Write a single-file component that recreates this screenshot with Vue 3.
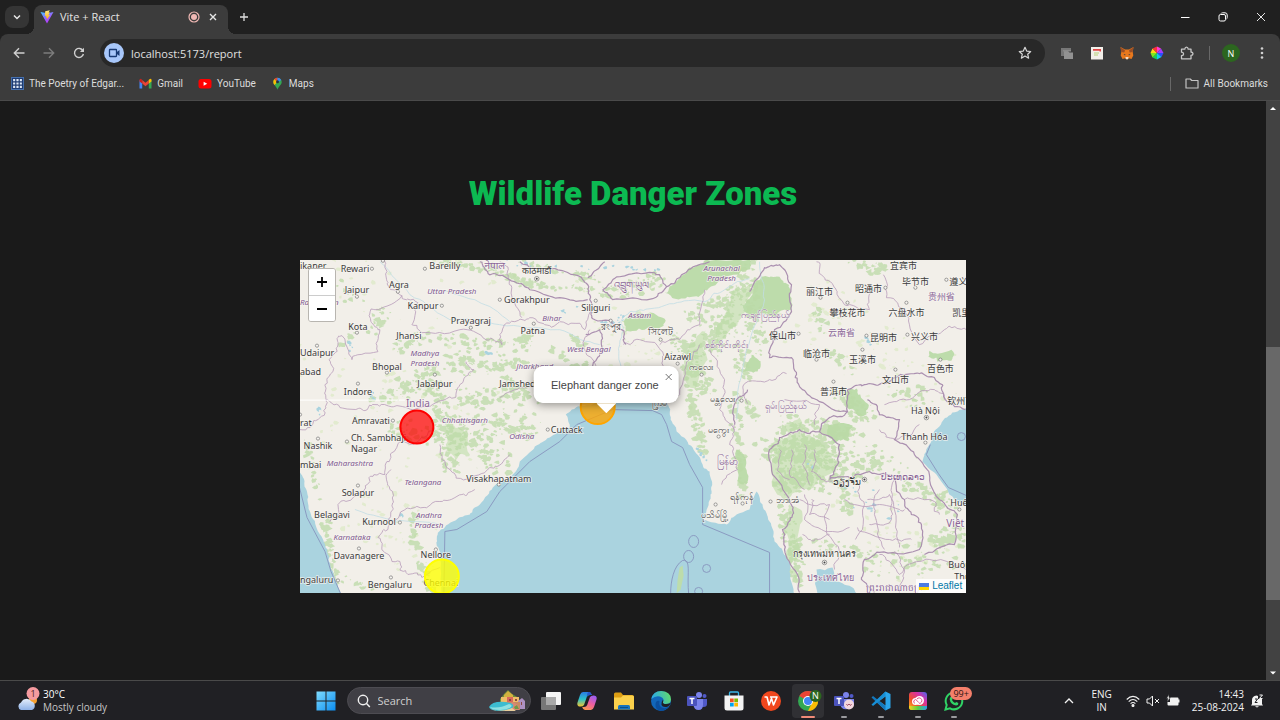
<script setup>
function makeRandom(seed) {
  let s = seed
  return () => {
    s = (s * 16807) % 2147483647
    return s / 2147483647
  }
}

// Roughens a coarse line so that it reads like a surveyed border or coast.
function rough(points, amp, seed, close) {
  const rnd = makeRandom(seed * 7919 + 13)
  let pts = points
  for (let pass = 0; pass < 3; pass++) {
    const next = []
    const a = amp / (pass + 1)
    for (let i = 0; i < pts.length - 1; i++) {
      const [x1, y1] = pts[i]
      const [x2, y2] = pts[i + 1]
      const len = Math.hypot(x2 - x1, y2 - y1)
      next.push(pts[i])
      if (len > 3) {
        const k = Math.min(a, len / 3)
        next.push([(x1 + x2) / 2 + (rnd() - 0.5) * 2 * k, (y1 + y2) / 2 + (rnd() - 0.5) * 2 * k])
      }
    }
    next.push(pts[pts.length - 1])
    pts = next
  }
  return 'M' + pts.map(p => p[0].toFixed(1) + ' ' + p[1].toFixed(1)).join('L') + (close ? 'Z' : '')
}

// [x1, y1, x2, y2, width, count]: forest patches scattered along a band
const bands = [
  [372, 330, 385, 310, 10, 26], [395, 350, 425, 335, 10, 26], [430, 335, 475, 345, 8, 26],
  [400, 385, 470, 355, 10, 50], [372, 400, 440, 385, 10, 50], [455, 365, 520, 365, 14, 60],
  [470, 345, 520, 345, 10, 24], [440, 405, 455, 470, 14, 110], [455, 400, 520, 395, 12, 60],
  [458, 430, 500, 460, 20, 110], [490, 420, 530, 430, 18, 80], [505, 380, 530, 400, 12, 34],
  [520, 335, 530, 345, 8, 18], [325, 520, 335, 590, 6, 60], [305, 440, 318, 500, 5, 24],
  [412, 515, 418, 550, 6, 30], [420, 560, 432, 590, 8, 30], [345, 580, 375, 592, 6, 16],
  [395, 430, 440, 440, 14, 40], [340, 345, 352, 336, 4, 12], [490, 268, 530, 285, 5, 50],
  [440, 262, 492, 270, 4, 24], [530, 285, 600, 290, 5, 30], [520, 262, 600, 280, 6, 34],
  [606, 292, 660, 282, 10, 60], [570, 335, 585, 345, 5, 16], [545, 345, 590, 372, 7, 16],
  [680, 340, 705, 395, 14, 110], [690, 318, 745, 292, 12, 80], [700, 350, 735, 315, 18, 100],
  [690, 400, 705, 450, 8, 60], [745, 262, 758, 350, 14, 100], [735, 330, 745, 380, 8, 36],
  [735, 395, 742, 500, 7, 60], [745, 400, 760, 420, 5, 24], [785, 420, 805, 435, 12, 40],
  [770, 450, 835, 450, 22, 260], [780, 480, 820, 480, 16, 150], [785, 510, 800, 580, 10, 100],
  [825, 430, 855, 432, 12, 60], [835, 455, 850, 520, 9, 60], [845, 475, 880, 465, 12, 40],
  [850, 262, 885, 270, 8, 30], [815, 310, 825, 332, 7, 18], [828, 350, 852, 372, 6, 16],
  [905, 480, 955, 510, 12, 60], [930, 545, 965, 535, 12, 60], [840, 395, 868, 420, 12, 60],
  [805, 425, 830, 428, 10, 30], [900, 395, 930, 400, 14, 26], [870, 560, 960, 565, 26, 50],
  [815, 545, 870, 555, 7, 26], [860, 455, 910, 470, 16, 36], [340, 290, 360, 300, 14, 10]
]
const rnd = makeRandom(4711)
function scatter(list, size) {
  let d = ''
  for (const [x1, y1, x2, y2, w, n] of list) {
    for (let i = 0; i < n; i++) {
      const t = rnd()
      const cx = x1 + (x2 - x1) * t + (rnd() + rnd() - 1) * w
      const cy = y1 + (y2 - y1) * t + (rnd() + rnd() - 1) * w
      const r = 0.5 + rnd() * size
      const pts = []
      for (let k = 0; k < 6; k++) {
        const a = (k / 6) * Math.PI * 2
        const q = r * (0.5 + rnd())
        pts.push((cx + Math.cos(a) * q * 1.3).toFixed(1) + ' ' + (cy + Math.sin(a) * q).toFixed(1))
      }
      d += 'M' + pts.join('L') + 'Z'
    }
  }
  return d
}
const forests = scatter(bands, 2.1)
const scrub = scatter([[300, 262, 560, 262, 120, 90], [320, 400, 470, 420, 60, 70], [600, 320, 660, 380, 40, 40], [800, 300, 940, 400, 50, 90], [850, 500, 940, 560, 50, 60], [360, 500, 420, 560, 40, 50]], 1.8)
const lakes = scatter([[350, 343, 352, 352, 3, 6], [487, 353, 492, 356, 4, 7], [318, 408, 320, 415, 3, 5], [372, 395, 376, 398, 3, 5], [866, 336, 870, 345, 2, 8], [490, 262, 660, 270, 4, 18], [400, 515, 410, 520, 3, 5], [810, 462, 815, 470, 3, 4], [695, 448, 708, 460, 3, 8], [555, 305, 640, 325, 10, 14], [850, 495, 920, 530, 14, 14], [588, 400, 650, 404, 4, 10]], 1.2)

const woods = [
  [[665, 293], [680, 278], [692, 268], [707, 260], [750, 260], [748, 270], [725, 279], [705, 290], [688, 297]],
  [[622, 322], [640, 313], [663, 318], [664, 326], [645, 330], [625, 333]],
  [[742, 305], [752, 296], [762, 277], [780, 277], [791, 290], [792, 310], [775, 317], [745, 312]],
  [[743, 373], [752, 355], [761, 367], [752, 372]],
  [[846, 392], [857, 389], [868, 404], [863, 417], [850, 410]],
  [[930, 351], [952, 350], [952, 361], [938, 362], [929, 357]],
  [[737, 450], [746, 458], [747, 485], [740, 484]],
  [[828, 426], [853, 426], [850, 440], [834, 444]]
].map((p, i) => rough([...p, p[0]], 4, i + 3, true))

const hills = [
  [[771, 446], [790, 436], [817, 440], [832, 453], [838, 468], [817, 484], [800, 490], [789, 502], [772, 474]],
  [[790, 505], [803, 515], [802, 558], [791, 566], [797, 586], [786, 560], [784, 530]],
  [[733, 291], [750, 284], [742, 318], [720, 345], [716, 330]],
  [[785, 425], [800, 418], [806, 430], [788, 434]],
  [[690, 345], [706, 330], [708, 360], [696, 390], [684, 375]],
  [[445, 420], [462, 430], [470, 455], [455, 462], [446, 445]]
].map((p, i) => rough([...p, p[0]], 5, i + 23, true))

const seas = [
  [[296, 465], [303, 478], [307, 492], [310, 512], [320, 535], [328, 555], [333, 572], [343, 598], [296, 598]],
  [[442, 598], [440, 552], [437, 538], [441, 530], [453, 522], [470, 515], [480, 505], [493, 488], [513, 475], [520, 462], [535, 447], [550, 438], [570, 428], [566, 415], [580, 407], [600, 401], [653, 400], [667, 403], [671, 420], [677, 432], [693, 448], [703, 465], [710, 472], [712, 492], [708, 508], [703, 520], [727, 525], [737, 515], [750, 510], [757, 492], [763, 505], [770, 522], [775, 542], [787, 558], [790, 572], [796, 598]],
  [[817, 570], [833, 568], [835, 582], [853, 588], [862, 598], [818, 598]],
  [[972, 406], [953, 413], [940, 427], [930, 445], [923, 462], [937, 475], [950, 495], [972, 510]]
].map((p, i) => rough([...p, p[0]], 2, i + 40, true))

const seaLines = [
  'M299 486L307 518L325 552L331 572L341 595',
  'M444 595L445 532L457 530L487 512L500 492L530 462L560 442L577 425L613 410L653 411L662 415L667 425L672 442L683 448L690 465L703 488L703 525L770 553V595',
  'M931 445L927 455L939 474L949 488L967 496',
  'M671 594C671 582 674 566 683 561C692 559 687 575 689 594'
]

const borders = [
  [[326, 400], [325, 385], [333, 372], [329, 360], [338, 345], [342, 336], [352, 360], [378, 352], [380, 330], [371, 322], [375, 310], [402, 296], [418, 303], [412, 325], [422, 333], [460, 330], [486, 340], [502, 345], [500, 335], [515, 322]],
  [[326, 400], [340, 408], [365, 411], [375, 405], [397, 406], [430, 407], [455, 398], [460, 385], [474, 370], [466, 362]],
  [[326, 400], [324, 412], [318, 420], [310, 428], [300, 430]],
  [[384, 260], [386, 276], [393, 290], [402, 296]],
  [[515, 322], [530, 318], [545, 325], [560, 322], [585, 330], [590, 310]],
  [[500, 262], [507, 275], [512, 288], [522, 318]],
  [[330, 522], [338, 505], [360, 494], [370, 482], [385, 475], [391, 458], [400, 442], [420, 440], [434, 430]],
  [[391, 470], [390, 490], [393, 510], [388, 530], [378, 538], [384, 552], [400, 562], [408, 575], [422, 578], [440, 568]],
  [[393, 522], [415, 508], [440, 502], [462, 495], [475, 490]],
  [[440, 445], [450, 470], [470, 480], [490, 468], [510, 455]],
  [[500, 398], [520, 388], [560, 388], [575, 400]],
  [[590, 330], [585, 350], [600, 372], [590, 390]],
  [[624, 345], [640, 340], [663, 352], [665, 375], [660, 400]],
  [[700, 345], [690, 360], [680, 395], [670, 400]],
  [[705, 290], [700, 325], [680, 340], [660, 345]],
  [[710, 350], [725, 380], [720, 410], [735, 430]],
  [[735, 425], [730, 445], [738, 470], [722, 485]],
  [[817, 262], [822, 275], [835, 288], [845, 305], [870, 310], [875, 290]],
  [[884, 275], [887, 298], [905, 310], [920, 345], [945, 330], [967, 330]],
  [[787, 374], [770, 380], [745, 384], [748, 404]],
  [[800, 500], [830, 505], [827, 530], [840, 552], [835, 570]],
  [[815, 450], [812, 472], [826, 482], [850, 480]],
  [[805, 495], [805, 520], [822, 530], [850, 528]],
  [[845, 500], [880, 505], [905, 510]],
  [[858, 528], [890, 540], [912, 540]],
  [[880, 490], [875, 515], [885, 550]],
  [[860, 485], [865, 505], [856, 540]],
  [[895, 480], [895, 510], [900, 548]],
  [[905, 500], [935, 502], [940, 515]],
  [[880, 430], [895, 440], [920, 425]],
  [[885, 405], [910, 400], [935, 390], [945, 400]],
  [[880, 555], [900, 575], [930, 560], [967, 570]],
  [[895, 552], [905, 570], [900, 593]],
  [[792, 450], [790, 475], [805, 490]],
  [[780, 450], [778, 470], [790, 480]],
  [[805, 445], [803, 465], [810, 485]],
  [[812, 500], [810, 515], [830, 520]],
  [[803, 535], [815, 540], [830, 535]],
  [[868, 500], [890, 495], [892, 520], [870, 525]],
  [[785, 400], [820, 405], [815, 425]]
].map((p, i) => rough(p, 4, i + 90, false))

const nations = [
  [[480, 262], [490, 275], [515, 282], [530, 290], [560, 298], [588, 300]],
  [[520, 262], [545, 270], [575, 275], [588, 285], [590, 300], [592, 318], [612, 322], [622, 330], [626, 345]],
  [[588, 278], [605, 262]],
  [[603, 290], [620, 277], [655, 273], [667, 287], [653, 299], [613, 300], [603, 290]],
  [[667, 287], [682, 275], [710, 262]],
  [[586, 335], [600, 330], [603, 350], [592, 370], [598, 395]],
  [[750, 292], [765, 268], [780, 265], [792, 285], [792, 312], [775, 330], [770, 358], [792, 358], [797, 375], [803, 390], [820, 402], [848, 412], [848, 390], [865, 385], [885, 384], [905, 375], [925, 375], [943, 385], [946, 400], [966, 410]],
  [[848, 412], [830, 418], [820, 432], [800, 430], [780, 438], [770, 450], [773, 475], [790, 500], [793, 515], [783, 530], [785, 550], [798, 575], [800, 593]],
  [[820, 432], [840, 445], [838, 465], [830, 480], [850, 478], [870, 472], [895, 478], [905, 500], [912, 515], [922, 525], [920, 550], [880, 553], [865, 560], [862, 580], [875, 593]],
  [[868, 400], [880, 415], [900, 420], [895, 440], [915, 455], [930, 475], [940, 500], [958, 515], [955, 545], [925, 555]],
  [[735, 425], [737, 400], [748, 390]]
].map((p, i) => rough(p, 3, i + 200, false))

const rivers = [
  [[750, 279], [725, 290], [705, 302], [670, 304], [640, 310], [622, 320], [620, 345], [622, 370]],
  [[380, 262], [410, 295], [450, 320], [500, 325], [560, 330], [600, 345]],
  [[430, 290], [475, 300], [510, 322]],
  [[760, 262], [765, 300], [745, 360], [737, 420]],
  [[355, 510], [395, 522], [440, 525]]
].map((p, i) => rough(p, 3, i + 300, false))

// [name, x, y, kind, anchor]; kind: c city, r region, n nation
const labels = [
  ['ikaner', 300, 269, 'c', 'start'], ['Rewari', 355, 272, 'c'], ['Bareilly', 445, 269, 'c'], ['नेपाल', 495, 269, 'n'],
  ['Jaipur', 357, 293, 'c'], ['Agra', 399, 288, 'c'], ['Uttar Pradesh', 452, 294, 'r'], ['Kanpur', 423, 309, 'c'],
  ['Gorakhpur', 527, 303, 'c'], ['काठमाडौं', 537, 274, 'c'], ['འབྲུག་ཡུལ', 632, 289, 'n'], ['Siliguri', 596, 311, 'c'],
  ['Ra', 300, 305, 'r', 'start'], ['n', 334, 305, 'r', 'start'], ['Prayagraj', 471, 324, 'c'], ['Kota', 358, 330, 'c'], ['Jhansi', 409, 339, 'c'],
  ['Bihar', 552, 321, 'r'], ['Patna', 533, 334, 'c'], ['Assam', 640, 318, 'r'], ['রংপুর', 611, 330, 'c'], ['সিলেট', 661, 335, 'c'],
  ['Udaipur', 300, 356, 'c', 'start'], ['abad', 300, 375, 'c', 'start'], ['Madhya', 425, 356, 'r'], ['Pradesh', 425, 366, 'r'],
  ['Bhopal', 387, 370, 'c'], ['Jabalpur', 435, 387, 'c'], ['Indore', 358, 395, 'c'], ['Jharkhand', 535, 369, 'r'],
  ['Jamshedpur', 525, 387, 'c'], ['West Bengal', 589, 352, 'r'], ['Aizawl', 678, 360, 'c'], ['ကလေး', 702, 370, 'c'],
  ['Arunachal', 722, 271, 'r'], ['Pradesh', 722, 281, 'r'], ['ကချင်ပြည်နယ်', 766, 318, 'm'], ['စစ်ကိုင်းတိုင်း', 727, 348, 'm'],
  ['India', 418, 407, 'n'], ['Amravati', 371, 424, 'c'], ['rat', 300, 426, 'c', 'start'], ['Chhattisgarh', 465, 423, 'r'],
  ['Nashik', 318, 449, 'c'], ['Ch. Sambhaji', 351, 441, 'c', 'start'], ['Nagar', 351, 452, 'c', 'start'], ['mbai', 300, 468, 'c', 'start'],
  ['Maharashtra', 350, 466, 'r'], ['Odisha', 522, 439, 'r'], ['Cuttack', 567, 433, 'c'], ['Telangana', 423, 485, 'r'],
  ['Solapur', 358, 496, 'c'], ['Visakhapatnam', 499, 482, 'c'], ['Belagavi', 332, 519, 'c'], ['Kurnool', 379, 526, 'c'],
  ['Andhra', 429, 519, 'r'], ['Pradesh', 429, 529, 'r'], ['Karnataka', 352, 541, 'r'], ['Davanagere', 359, 560, 'c'],
  ['Nellore', 436, 559, 'c'], ['ngaluru', 300, 584, 'c', 'start'], ['Bengaluru', 390, 589, 'c'], ['Chennai', 441, 587, 'c'],
  ['ဂ္ဂြာမ', 660, 406, 'c'], ['မန္တလေး', 723, 402, 'c'], ['မကွေး', 719, 433, 'c'], ['မြန်မာ', 728, 465, 'n'],
  ['ရန်ကုန်', 742, 500, 'c'], ['ပုသိမ်မြို့', 715, 519, 'c'], ['ရှမ်းပြည်နယ်', 786, 409, 'm'], ['ဘားအံ', 788, 503, 'c'],
  ['宜宾市', 904, 269, 'c'], ['毕节市', 916, 285, 'c'], ['遵义市', 950, 285, 'c', 'start'], ['丽江市', 820, 295, 'c'], ['昭通市', 869, 292, 'c'],
  ['贵州省', 942, 300, 'p'], ['攀枝花市', 848, 316, 'c'], ['六盘水市', 907, 316, 'c'], ['凯里市', 953, 316, 'c', 'start'],
  ['云南省', 842, 336, 'p'], ['保山市', 783, 339, 'c'], ['昆明市', 884, 341, 'c'], ['兴义市', 925, 340, 'c'],
  ['临沧市', 817, 357, 'c'], ['玉溪市', 863, 363, 'c'], ['百色市', 941, 372, 'c'], ['文山市', 896, 383, 'c'], ['普洱市', 834, 395, 'c'],
  ['钦州市', 948, 404, 'c', 'start'], ['Hà Nội', 926, 414, 'c'], ['Thanh Hóa', 925, 440, 'c'], ['ວຽງຈັນ', 848, 485, 'c'],
  ['ປະເທດລາວ', 904, 480, 'p'], ['Huế', 951, 507, 'c', 'start'], ['Việt Nam', 947, 528, 'n', 'start'],
  ['กรุงเทพมหานคร', 825, 558, 'c'], ['ประเทศไทย', 831, 582, 'p'], ['Buôn', 949, 569, 'c', 'start'], ['Thuột', 955, 581, 'c', 'start'],
  ['ព្រះរាជាណាចក្រ', 895, 592, 'p']
]

const towns = [[372, 269], [383, 261], [357, 297], [398, 292], [425, 269], [442, 306], [500, 300], [471, 328], [357, 333], [317, 346], [387, 373], [435, 375], [358, 384], [393, 421], [318, 439], [347, 442], [300, 415], [358, 486], [400, 523], [359, 549], [436, 550], [338, 581], [391, 578], [499, 485], [548, 430], [534, 324], [596, 301], [611, 321], [661, 340], [678, 364], [702, 375], [719, 437], [742, 401], [716, 505], [743, 504], [771, 502], [821, 298], [886, 288], [916, 288], [947, 280], [848, 303], [907, 303], [799, 334], [867, 336], [908, 335], [817, 360], [863, 350], [941, 360], [896, 370], [834, 382], [926, 443], [960, 510]]
const capitals = [[537, 279], [927, 418], [865, 480], [825, 563]]
</script>

<template>
  <div class="screen">
    <header class="browser">
      <div class="tabs">
        <button class="tab-search" aria-label="Search tabs">
          <svg width="10" height="10" viewBox="0 0 10 10"><path d="M2 3.500L5 6.500L8 3.500" fill="none" stroke="#e6e6e6" stroke-width="1.500" /></svg>
        </button>
        <div class="tab">
          <svg width="14" height="14" viewBox="0 0 14 14">
            <defs>
              <linearGradient id="vite" x1="0" y1="0" x2="0.600" y2="1"><stop offset="0" stop-color="#41c8ff" /><stop offset="0.600" stop-color="#9a60fe" /><stop offset="1" stop-color="#bd34fe" /></linearGradient>
              <linearGradient id="bolt" x1="0" y1="0" x2="0" y2="1"><stop offset="0" stop-color="#ffea83" /><stop offset="1" stop-color="#ffa800" /></linearGradient>
            </defs>
            <path d="M0.500 2L7 13.500L13.500 2L7.500 3.200Z" fill="url(#vite)" />
            <path d="M9.800 0.300L5.200 1.200L4.900 6L6.300 5.700L5.900 7.800L7.200 7.400L6.700 10L10 5L8.300 5.300L9.900 2.300L8.600 2.500Z" fill="url(#bolt)" />
          </svg>
          <span class="tab-title">Vite + React</span>
          <svg width="12" height="12" viewBox="0 0 12 12"><circle cx="6" cy="6" r="5" fill="none" stroke="#f0b8b4" stroke-width="1.200" /><circle cx="6" cy="6" r="3" fill="#f0b8b4" /></svg>
          <button class="plain" aria-label="Close tab">
            <svg width="10" height="10" viewBox="0 0 10 10"><path d="M2 2L8 8M8 2L2 8" stroke="#e6e6e6" stroke-width="1.400" /></svg>
          </button>
        </div>
        <button class="plain new-tab" aria-label="New tab">
          <svg width="10" height="10" viewBox="0 0 10 10"><path d="M5 1V9M1 5H9" stroke="#dedede" stroke-width="1.300" /></svg>
        </button>
        <div class="window-buttons">
          <button class="plain" aria-label="Minimise"><svg width="10" height="10" viewBox="0 0 10 10"><path d="M1 5.500H9.500" stroke="#fff" /></svg></button>
          <button class="plain" aria-label="Restore"><svg width="10" height="10" viewBox="0 0 10 10" fill="none" stroke="#fff"><rect x="1" y="2.500" width="6.500" height="6.500" rx="1.500" /><path d="M3 1.500Q3.300 0.800 4.500 0.800H7Q9.200 0.800 9.200 3V5.500Q9.200 6.800 8.500 7" /></svg></button>
          <button class="plain" aria-label="Close"><svg width="10" height="10" viewBox="0 0 10 10"><path d="M1 1L9 9M9 1L1 9" stroke="#e6e6e6" /></svg></button>
        </div>
      </div>

      <div class="toolbar">
        <nav class="history">
          <button class="plain" aria-label="Back"><svg width="12" height="12" viewBox="0 0 12 12"><path d="M11.500 6H1.500M6 1.200L1.300 6L6 10.800" fill="none" stroke="#d0d0d0" stroke-width="1.400" /></svg></button>
          <button class="plain" aria-label="Forward"><svg width="12" height="12" viewBox="0 0 12 12"><path d="M0.500 6H10.500M6 1.200L10.700 6L6 10.800" fill="none" stroke="#7c7c7c" stroke-width="1.400" /></svg></button>
          <button class="plain" aria-label="Reload"><svg width="12" height="12" viewBox="0 0 12 12"><path d="M10 3.800A4.500 4.500 0 1 0 10.400 7" fill="none" stroke="#d0d0d0" stroke-width="1.400" /><path d="M11 0.800V4.900H6.900Z" fill="#d0d0d0" /></svg></button>
        </nav>
        <div class="omnibox">
          <button class="site" aria-label="Site information">
            <svg width="12" height="12" viewBox="0 0 12 12"><rect x="1.500" y="2.500" width="7" height="7" rx="0.500" fill="none" stroke="#183a75" stroke-width="1.300" /><path d="M8.500 5.300L11.500 3V9L8.500 6.700Z" fill="#183a75" /></svg>
          </button>
          <input class="url" type="text" aria-label="Address" value="localhost:5173/report" />
          <button class="plain" aria-label="Bookmark this page">
            <svg width="14" height="14" viewBox="0 0 14 14"><path d="M7 1.300L8.700 5.100L12.700 5.500L9.700 8.200L10.600 12.200L7 10.100L3.400 12.200L4.300 8.200L1.300 5.500L5.300 5.100Z" fill="none" stroke="#d6d6d6" stroke-width="1.200" stroke-linejoin="round" /></svg>
          </button>
        </div>
        <div class="extensions">
          <button class="plain" aria-label="Tab groups"><svg width="14" height="14" viewBox="0 0 14 14"><path d="M1 2H11V5H4V10H1Z" fill="#777" /><path d="M4 5H8L9.500 6.500H13V13H4Z" fill="#929292" /><path d="M3 4H11V5.500H3Z" fill="#8a8a8a" /></svg></button>
          <button class="plain" aria-label="Notes"><svg width="14" height="14" viewBox="0 0 14 14"><rect x="1" y="1" width="12" height="12.500" fill="#f3f0ea" /><path d="M3 3H11V5.500H9.500V4.700H3Z" fill="#e14545" /><path d="M4 7H9M4 9H8" stroke="#b8d17a" stroke-width="1.200" /></svg></button>
          <button class="plain" aria-label="MetaMask"><svg width="14" height="14" viewBox="0 0 14 14"><path d="M0.500 1L5 3.500H9L13.500 1L12.700 6L13.300 9.500L11.500 13L9 12.300L7.800 13.300H6.200L5 12.300L2.500 13L0.700 9.500L1.300 6Z" fill="#e8781d" /><path d="M0.500 1L5 4.500L4.300 6.500L1.300 6ZM13.500 1L9 4.500L9.700 6.500L12.700 6Z" fill="#9c4f26" /><path d="M3.500 8L5.500 8.500L5 9.500ZM10.500 8L8.500 8.500L9 9.500Z" fill="#253447" /><path d="M5.300 11.500L6 11H8L8.700 11.500L7.800 13.300H6.200Z" fill="#f0ddc9" /></svg></button>
          <button class="plain" aria-label="Colour picker"><svg width="14" height="14" viewBox="0 0 14 14">
            <path d="M7 7L7 0.500L11 2.500Z" fill="#ff3ad0" /><path d="M7 7L11 2.500L13.500 7Z" fill="#a53cff" /><path d="M7 7H13.500L11.500 11Z" fill="#2b50ff" /><path d="M7 7L11.500 11L7 13.500Z" fill="#14c9f0" /><path d="M7 7V13.500L2.500 11.500Z" fill="#19d05c" /><path d="M7 7L2.500 11.500L0.500 7Z" fill="#7fe81e" /><path d="M7 7H0.500L2.500 2.500Z" fill="#ffd817" /><path d="M7 7L2.500 2.500L7 0.500Z" fill="#ff2f3c" /></svg></button>
          <button class="plain" aria-label="Extensions"><svg width="14" height="14" viewBox="0 0 14 14"><path d="M1.500 3.200H4.800Q5 1.200 6.500 1.200T8.200 3.200H11V6Q13 6.200 13 7.700T11 9.400V12.800H1.500V9.600Q3.600 9.400 3.600 7.900T1.500 6.200Z" fill="none" stroke="#c8c8c8" stroke-width="1.300" stroke-linejoin="round" /></svg></button>
          <span class="rule"></span>
          <button class="profile" aria-label="Profile">N</button>
          <button class="plain" aria-label="Menu"><svg width="14" height="14" viewBox="0 0 14 14" fill="#d0d0d0"><circle cx="7" cy="2.500" r="1.300" /><circle cx="7" cy="7" r="1.300" /><circle cx="7" cy="11.500" r="1.300" /></svg></button>
        </div>
      </div>

      <nav class="bookmarks">
        <a href="#poetry"><svg width="13" height="13" viewBox="0 0 13 13"><rect width="13" height="13" fill="#4670ad" /><path d="M1.500 1.500H11.500V11.500H1.500Z" fill="#dce6f4" /><path d="M1.500 4.800H11.500M1.500 8.200H11.500M4.800 1.500V11.500M8.200 1.500V11.500M1.500 1.500H11.500V11.500H1.500Z" fill="none" stroke="#1e3c73" stroke-width="1.200" /></svg>The Poetry of Edgar...</a>
        <a href="#gmail"><svg width="13" height="13" viewBox="0 0 13 13"><path d="M0.500 3V11.500H3.200V5Z" fill="#4285f4" /><path d="M12.500 3V11.500H9.800V5Z" fill="#34a853" /><path d="M3.200 3L6.500 5.700L9.800 3V6.500L6.500 9.200L3.200 6.500Z" fill="#ea4335" /><path d="M0.500 3Q0.700 1 2.500 2.200L3.200 2.800V6.500L0.500 4.400Z" fill="#c5221f" /><path d="M12.500 3Q12.300 1 10.500 2.200L9.800 2.800V6.500L12.500 4.400Z" fill="#fbbc04" /></svg>Gmail</a>
        <a href="#youtube"><svg width="14" height="13" viewBox="0 0 14 13"><rect x="0.500" y="2" width="13" height="9.500" rx="2.500" fill="#f00" /><path d="M5.600 4.700L9.200 6.700L5.600 8.700Z" fill="#fff" /></svg>YouTube</a>
        <a href="#maps"><svg width="13" height="13" viewBox="0 0 13 13"><path d="M2.300 5A4.200 4.200 0 0 1 10.700 5C10.700 8 7.600 9 6.500 12.800C5.400 9 2.300 8 2.300 5Z" fill="#34a853" /><path d="M2.300 5A4.200 4.200 0 0 1 3.400 2L6.500 5L3.400 8Q2.300 6.700 2.300 5Z" fill="#fbbc04" /><path d="M3.400 2A4.200 4.200 0 0 1 6.500 0.800V5Z" fill="#ea4335" /><path d="M6.500 0.800A4.200 4.200 0 0 1 10.200 3L6.500 6Z" fill="#4285f4" /><circle cx="6.500" cy="4.800" r="1.500" fill="#234" /></svg>Maps</a>
        <a class="all" href="#all"><svg width="14" height="13" viewBox="0 0 14 13"><path d="M1 2H5.300L6.700 3.500H13V11H1Z" fill="none" stroke="#c4c4c4" stroke-width="1.200" stroke-linejoin="round" /></svg>All Bookmarks</a>
      </nav>
    </header>

    <div class="viewport">
      <main class="page">
        <h1>Wildlife Danger Zones</h1>
        <section class="map" aria-label="Danger zone map">
          <svg class="tiles" viewBox="300 260 667 334" preserveAspectRatio="xMidYMid slice">
            <rect x="300" y="260" width="667" height="334" fill="#f2efe9" />
            <path :d="scrub" class="scrub" />
            <path v-for="(d, i) in hills" :key="'h' + i" :d="d" class="hill" />
            <path v-for="(d, i) in woods" :key="'w' + i" :d="d" class="wood" />
            <path :d="forests" class="forest" />
            <path v-for="(d, i) in rivers" :key="'v' + i" :d="d" class="river" />
            <path v-for="(d, i) in seas" :key="'s' + i" :d="d" class="sea" />
            <path :d="lakes" class="sea" />
            <path v-for="(d, i) in borders" :key="'b' + i" :d="d" class="border" />
            <path v-for="(d, i) in nations" :key="'n' + i" :d="d" class="nation" />
            <path d="M680 568L683 566L684 576L681 590L677 594L678 580Z" class="wood" />
            <path v-for="(d, i) in seaLines" :key="'l' + i" :d="d" class="sea-line" />
            <g class="sea-line">
              <ellipse cx="694" cy="542" rx="5" ry="6" /><ellipse cx="689" cy="557" rx="5" ry="6" /><circle cx="707" cy="569" r="4" /><circle cx="699" cy="592" r="4" /><circle cx="962" cy="437" r="4" />
            </g>
            <path d="M300 400.500H405" stroke="#fff" stroke-width="1" />
            <circle v-for="([x, y], i) in towns" :key="'t' + i" :cx="x" :cy="y" r="1.600" class="town" />
            <g v-for="([x, y], i) in capitals" :key="'k' + i"><circle :cx="x" :cy="y" r="2.300" class="town" /><circle :cx="x" :cy="y" r="1" fill="#444" /></g>
            <text v-for="([name, x, y, kind, anchor], i) in labels" :key="'x' + i" :x="x" :y="y" :text-anchor="anchor || 'middle'" :class="['label', kind]">{{ name }}</text>
            <circle cx="417" cy="427.500" r="16.500" class="zone red" />
            <circle cx="598" cy="407.500" r="17" class="zone orange" />
            <circle cx="442" cy="577" r="17" class="zone yellow" />
          </svg>
          <div class="zoom">
            <button aria-label="Zoom in"><svg width="12" height="12" viewBox="0 0 12 12"><path d="M6 1V11M1 6H11" stroke="#000" stroke-width="1.800" /></svg></button>
            <button aria-label="Zoom out"><svg width="12" height="12" viewBox="0 0 12 12"><path d="M1 6H11" stroke="#000" stroke-width="1.800" /></svg></button>
          </div>
          <div class="popup">
            Elephant danger zone
            <button class="popup-close" aria-label="Close popup"><svg width="8" height="8" viewBox="0 0 8 8"><path d="M1 1L7 7M7 1L1 7" stroke="#757575" /></svg></button>
          </div>
          <a class="credit" href="#leaflet"><svg width="10" height="7" viewBox="0 0 10 7"><rect width="10" height="4" fill="#4c7be1" /><rect y="4" width="10" height="3" fill="#ffd500" /></svg>Leaflet</a>
        </section>
      </main>
      <div class="scrollbar">
        <svg width="14" height="14" viewBox="0 0 14 14"><path d="M4 9L7 6L10 9Z" fill="#fff" /></svg>
        <div class="track"><div class="thumb"></div></div>
        <svg width="14" height="14" viewBox="0 0 14 14"><path d="M4 5.500L7 8.500L10 5.500Z" fill="#fff" /></svg>
      </div>
    </div>

    <footer class="taskbar">
      <button class="weather">
        <svg width="26" height="28" viewBox="0 0 26 28">
          <defs><linearGradient id="cloud" x1="0" y1="0" x2="0" y2="1"><stop offset="0" stop-color="#e4edfb" /><stop offset="1" stop-color="#8fb2e8" /></linearGradient></defs>
          <circle cx="17" cy="13" r="4" fill="#f5a031" />
          <path d="M5 23A4 4 0 0 1 5 15.500A6 6 0 0 1 15.500 14.500A4.500 4.500 0 0 1 16 23Z" fill="url(#cloud)" />
          <circle cx="17" cy="6.500" r="6.500" fill="#f59a9f" /><text x="17" y="10" text-anchor="middle" class="badge-text">1</text>
        </svg>
        <span><b>30°C</b><br />Mostly cloudy</span>
      </button>

      <div class="centre">
        <button class="plain" aria-label="Start">
          <svg width="20" height="20" viewBox="0 0 20 20"><defs><linearGradient id="win" x1="0" y1="0" x2="1" y2="1"><stop offset="0" stop-color="#7fdcff" /><stop offset="1" stop-color="#0a8cf0" /></linearGradient></defs><path d="M0.500 0.500H9.500V9.500H0.500ZM10.500 0.500H19.500V9.500H10.500ZM0.500 10.500H9.500V19.500H0.500ZM10.500 10.500H19.500V19.500H10.500Z" fill="url(#win)" /></svg>
        </button>
        <label class="search">
          <svg width="14" height="14" viewBox="0 0 14 14"><circle cx="6" cy="6" r="4.700" fill="none" stroke="#f0f0f0" stroke-width="1.400" /><path d="M9.300 9.300L12.800 13" stroke="#f0f0f0" stroke-width="1.500" /></svg>
          <input type="search" aria-label="Search" placeholder="Search" />
          <svg width="40" height="24" viewBox="0 0 40 24">
            <path d="M13 10L17 5L21 1L25 5L32 9V13H13Z" fill="#6f8f3a" /><path d="M17 6L21 2L26 6V9H17Z" fill="#d3b13f" />
            <path d="M14 8H20V14H14Z" fill="#efbd68" /><path d="M20 8H26V15H20Z" fill="#d9685d" /><path d="M26 8H32V17H26Z" fill="#efbd68" /><path d="M31 12L35 9L38 12V20H31Z" fill="#ad91c3" />
            <path d="M12 13H33V20H22Z" fill="#c98a62" /><path d="M20 16L26 13L31 16L33 21H20Z" fill="#d98872" />
            <path d="M2 18Q5 12 18 13Q28 14 26 18Q24 22 14 22Q3 22 2 18Z" fill="#3cbcd0" /><path d="M3 18Q12 20 22 15Q26 16 24 18Q20 21 13 21Q4 21 3 18Z" fill="#8fe0e2" /><path d="M3 20Q13 24 25 19L29 22H12Z" fill="#e8ce9a" />
            <path d="M22 10H24V12H22ZM28 10H30V12H28ZM34 13H35V16H34Z" fill="#8b4a40" /><path d="M27 18L30 16L32 20H28Z" fill="#6e9a47" />
          </svg>
        </label>
        <div class="apps">
          <button class="plain" aria-label="Task view"><svg width="20" height="20" viewBox="0 0 20 20"><rect x="5" y="1" width="15" height="13" rx="1" fill="#f4f4f4" /><rect x="0" y="6" width="15" height="13" rx="1" fill="#777" /><path d="M5 6H15V14H5Z" fill="#a9a9a9" /></svg></button>
          <button class="plain" aria-label="Copilot"><svg width="20" height="20" viewBox="0 0 20 20">
            <defs><linearGradient id="cp1" x1="0" y1="0" x2="0" y2="1"><stop offset="0" stop-color="#2a7be4" /><stop offset="0.500" stop-color="#2cc2c8" /><stop offset="1" stop-color="#f2c52f" /></linearGradient><linearGradient id="cp2" x1="0.700" y1="0" x2="0.200" y2="1"><stop offset="0" stop-color="#9c5df0" /><stop offset="0.500" stop-color="#ef5f9d" /><stop offset="1" stop-color="#fb9a4b" /></linearGradient></defs>
            <path d="M6 1H12Q14 1 14.800 4H13Q10.500 4 9.800 6L7 14Q6 15.500 3.500 15.500Q-0.500 15.500 0.500 11.500L3 4Q4 1 6 1Z" fill="url(#cp1)" />
            <path d="M14 19H8Q6 19 5.200 16H7Q9.500 16 10.200 14L13 6Q14 4.500 16.500 4.500Q20.500 4.500 19.500 8.500L17 16Q16 19 14 19Z" fill="url(#cp2)" /><path d="M12 1Q14 1 14.800 4H13Q10.500 4 9.800 6Q10 1 12 1Z" fill="#2456c9" /></svg></button>
          <button class="plain" aria-label="File Explorer"><svg width="20" height="20" viewBox="0 0 20 20"><path d="M0 3Q0 1.500 1.500 1.500H7L9 4H18Q20 4 20 5.500V9H0Z" fill="#dc9d13" /><path d="M0 6.500H7L9 4.500H18.500Q20 4.500 20 6V18.500H0Z" fill="#fbd14c" /><path d="M4 18.500V15.500Q4 14 5.500 14H14.500Q16 14 16 15.500V18.500Z" fill="#1674be" /><path d="M6 16H14V17H6Z" fill="#0e4f86" /></svg></button>
          <button class="plain" aria-label="Edge"><svg width="20" height="20" viewBox="0 0 20 20">
            <defs><linearGradient id="ed" x1="0" y1="0.400" x2="1" y2="0.200"><stop offset="0" stop-color="#2aa7e8" /><stop offset="1" stop-color="#62dc69" /></linearGradient></defs>
            <circle cx="10" cy="10" r="10" fill="#1267ba" /><path d="M0.300 8Q2 0 10.300 0Q20 0.500 20 8.500Q19.500 13 15 13Q11.500 13 12 11Q13.500 8.500 11 6.500Q6 3.500 0.300 8Z" fill="url(#ed)" /><path d="M12 11Q11.500 13 15 13Q17.500 13 19.600 12Q19 14.500 17 15.500Q12 17 10.500 14Q10 11 12 8.500Q12.500 10 12 11Z" fill="#202024" /><path d="M8.500 10Q7 16.500 13.500 17.200Q16 17 18.300 15Q15 20 10 20Q4 19 4.500 13Q5 9 8.500 10Z" fill="#0b4f9e" /></svg></button>
          <button class="plain" aria-label="Teams"><svg width="20" height="20" viewBox="0 0 20 20"><circle cx="12" cy="4" r="3" fill="#7b83eb" /><circle cx="17.500" cy="5" r="2" fill="#5059c9" /><path d="M14 8H20V13Q20 16 16.500 16H14Z" fill="#5059c9" /><path d="M7 8H16V13.500Q16 19 11.500 19Q7 19 6.500 14Z" fill="#7b83eb" /><rect y="5" width="10" height="10" rx="1" fill="#4b53bc" /><path d="M2.500 7.500H7.500M5 7.500V13" stroke="#fff" stroke-width="1.500" /></svg></button>
          <button class="plain" aria-label="Microsoft Store"><svg width="20" height="20" viewBox="0 0 20 20"><path d="M5.500 5V2Q5.500 1 6.500 1H13.500Q14.500 1 14.500 2V5" fill="none" stroke="#38b6e8" stroke-width="1.300" /><path d="M0.500 4.500H19.500V17Q19.500 19.500 17 19.500H3Q0.500 19.500 0.500 17Z" fill="#f3f3f3" /><path d="M6 7.500H9.700V11.200H6Z" fill="#f25022" /><path d="M10.300 7.500H14V11.200H10.300Z" fill="#7fba00" /><path d="M6 11.800H9.700V15.500H6Z" fill="#00a4ef" /><path d="M10.300 11.800H14V15.500H10.300Z" fill="#ffb900" /></svg></button>
          <button class="plain" aria-label="WPS Office"><svg width="20" height="20" viewBox="0 0 20 20"><circle cx="10" cy="10" r="10" fill="#f1471d" /><path d="M3.500 6H6L8 14L10.500 7.500L12.500 14L16 6H9" fill="none" stroke="#fff" stroke-width="1.600" stroke-linejoin="round" /></svg></button>
          <button class="plain active" aria-label="Chrome"><svg width="26" height="22" viewBox="0 0 26 22"><circle cx="10" cy="11" r="10" fill="#33a852" /><path d="M10 11L1.300 6A10 10 0 0 1 18.700 6Z" fill="#ea4335" /><path d="M10 11L18.700 6A10 10 0 0 1 10 21L14 13Z" fill="#fbbc05" /><circle cx="10" cy="11" r="5" fill="#fff" /><circle cx="10" cy="11" r="4" fill="#4285f4" /><circle cx="17.500" cy="6" r="6" fill="#2c661f" /><text x="17.500" y="9" text-anchor="middle" class="chrome-n">N</text></svg></button>
          <button class="plain running" aria-label="Teams meeting"><svg width="20" height="20" viewBox="0 0 20 20"><circle cx="12" cy="4" r="3" fill="#7b83eb" /><circle cx="17.500" cy="5" r="2" fill="#5059c9" /><path d="M7 8H20V13Q19 17 14 18Q7 19 6.500 14Z" fill="#7b83eb" /><rect y="5" width="10" height="10" rx="1" fill="#4b53bc" /><path d="M2.500 7.500H7.500M5 7.500V13" stroke="#fff" stroke-width="1.500" /><circle cx="15" cy="13.500" r="5" fill="#f2d7de" /><path d="M12.500 13L13.500 14.500L15 13L16.500 14.500L17.500 13" fill="none" stroke="#a4506a" /></svg></button>
          <button class="plain running" aria-label="Visual Studio Code"><svg width="20" height="20" viewBox="0 0 20 20"><path d="M14.500 0.500L19.500 3V17L14.500 19.500L5 10.500L14.500 0.500Z" fill="#2ba5ea" /><path d="M0.500 6.500L2 5L14.500 15V19.500Z" fill="#1478bd" /><path d="M0.500 13.500L2 15L14.500 5V0.500Z" fill="#178fd6" /><path d="M14.500 5.500V14.500L8.500 10Z" fill="#202024" /></svg></button>
          <button class="plain running" aria-label="Creative Cloud"><svg width="20" height="20" viewBox="0 0 20 20">
            <defs><linearGradient id="cc1" x1="0" y1="1" x2="1" y2="0"><stop offset="0" stop-color="#f7c61d" /><stop offset="0.350" stop-color="#f0502b" /><stop offset="0.700" stop-color="#d831a6" /><stop offset="1" stop-color="#3f6bf0" /></linearGradient><linearGradient id="cc2" x1="0" y1="0" x2="1" y2="0"><stop offset="0" stop-color="#f6d31d" /><stop offset="0.500" stop-color="#55cf45" /><stop offset="1" stop-color="#2a9df0" /></linearGradient></defs>
            <rect x="1" y="1" width="18" height="18" rx="3" fill="url(#cc1)" /><path d="M1 15H19V16Q19 19 16 19H4Q1 19 1 16Z" fill="url(#cc2)" /><circle cx="7.500" cy="10.500" r="3.500" fill="#fff" /><circle cx="11.500" cy="9.500" r="4.500" fill="#fff" /><path d="M7 12.300A1.800 1.800 0 1 1 9 9.500L10.500 11.500M11 12.300A2.700 2.700 0 1 0 9 8" fill="none" stroke="#e0407c" stroke-width="0.900" /></svg></button>
          <button class="plain running" aria-label="WhatsApp"><svg width="20" height="20" viewBox="0 0 20 20"><path d="M1.500 18.500L2.700 14A8.300 8.300 0 1 1 6 17.300Z" fill="none" stroke="#30d366" stroke-width="2" /><path d="M6.500 6Q7.500 5 8 6L8.700 7.700L8 9Q9 11 11 12L12.300 11L14.300 12Q14.500 14.500 12 14.500Q6.500 13.500 5.700 8.500Q5.600 7 6.500 6Z" fill="#30d366" /></svg><span class="count">99+</span></button>
        </div>
      </div>

      <div class="tray">
        <button class="plain" aria-label="Hidden icons"><svg width="10" height="10" viewBox="0 0 10 10"><path d="M1 7L5 3L9 7" fill="none" stroke="#f2f2f2" stroke-width="1.300" /></svg></button>
        <button class="plain language">ENG<br />IN</button>
        <div class="status">
          <svg width="14" height="14" viewBox="0 0 14 14" fill="none" stroke="#f2f2f2" stroke-width="1.100"><path d="M0.700 5.500Q7 -0.700 13.300 5.500M2.700 7.700Q7 3.300 11.300 7.700M4.600 9.700Q7 7.300 9.400 9.700" /><circle cx="7" cy="11.500" r="1" fill="#f2f2f2" /></svg>
          <svg width="14" height="14" viewBox="0 0 14 14" fill="none" stroke="#f2f2f2"><path d="M1 5H3.500L6.500 2V12L3.500 9H1ZM9 5L13 9M13 5L9 9" /></svg>
          <svg width="14" height="14" viewBox="0 0 14 14"><path d="M4 3.500H11.500Q12.500 3.500 12.500 4.500V5.500H13.500V8.500H12.500V10.500Q12.500 11.500 11.500 11.500H2.500Q1.500 11.500 1.500 10.500V8H4Z" fill="#f2f2f2" /><path d="M3 0.500L0.500 4.500H2L1 8L4.500 3.500H3Z" fill="#f2f2f2" stroke="#202024" stroke-width="0.500" /></svg>
        </div>
        <button class="plain clock">14:43<br />25-08-2024</button>
        <svg width="14" height="14" viewBox="0 0 14 14"><path d="M2 10V6Q2 2 6.500 1.500L8 2V5H12V10L13 11.500H1Z" fill="#f2f2f2" /><path d="M5 12.300H9Q7 14.500 5 12.300Z" fill="#f2f2f2" /><path d="M5 5H7.500L5 8.500H7.500" fill="none" stroke="#202024" /><path d="M9.500 1H12.500L9.500 4.500H12.500" fill="none" stroke="#f2f2f2" /></svg>
      </div>
    </footer>
  </div>
</template>

<style>
html, body { margin: 0; background: #1a1a1a; }
</style>

<style scoped>
* { box-sizing: border-box; }
svg { display: block; flex: none; }
button { font: inherit; color: inherit; border: 0; padding: 0; cursor: pointer; }
input { font: inherit; border: 0; padding: 0; background: transparent; min-width: 0; outline: 0; }
a { text-decoration: none; }
.plain { background: transparent; display: flex; align-items: center; justify-content: center; }
.screen { min-height: 100vh; display: flex; flex-direction: column; background: #1a1a1a; font-family: "Open Sans", "Noto Sans", sans-serif; color: #e3e3e3; }
.browser { background: #202020; }
.tabs { display: flex; align-items: center; height: 34px; padding-left: 5px; }
.tab-search { width: 24px; height: 22px; border-radius: 8px; background: #353535; display: grid; place-items: center; }
.tab { position: relative; display: flex; align-items: center; gap: 6px; align-self: flex-end; width: 194px; height: 29px; margin-left: 5px; padding: 0 8px 6px 6px; border-radius: 8px 8px 0 0; background: #3c3c3c; font-size: 11px; }
.tab::before, .tab::after { content: ""; position: absolute; bottom: 0; width: 8px; height: 8px; }
.tab::before { right: 100%; background: radial-gradient(circle at 0 0, transparent 8px, #3c3c3c 8px); }
.tab::after { left: 100%; background: radial-gradient(circle at 100% 0, transparent 8px, #3c3c3c 8px); }
.tab-title { flex: 1; }
.tab > .plain { width: 14px; }
.new-tab { width: 32px; height: 24px; }
.window-buttons { margin-left: auto; display: flex; }
.window-buttons .plain { width: 38px; height: 30px; }
.toolbar { display: flex; align-items: center; height: 38px; padding: 0 11px; background: #3c3c3c; border-radius: 8px 8px 0 0; }
.history { display: flex; gap: 18px; padding: 0 15px 0 2px; }
.omnibox { flex: 1; display: flex; align-items: center; gap: 7px; height: 28px; padding: 0 13px 0 4px; border-radius: 14px; background: #282828; }
.site { width: 20px; height: 20px; border-radius: 50%; background: #a8c7fa; display: grid; place-items: center; }
.url { flex: 1; font-size: 11px; color: #e0e0e0; }
.extensions { display: flex; align-items: center; gap: 16px; padding-left: 15px; }
.rule { width: 1px; height: 14px; background: #686868; margin: 0 -3px 0 -1px; }
.profile { width: 18px; height: 18px; margin: 0 -1px; border-radius: 50%; background: #2c661f; font-size: 9px; color: #fff; display: grid; place-items: center; }
.bookmarks { display: flex; align-items: center; gap: 15px; height: 29px; padding: 0 12px 5px 11px; background: #3c3c3c; border-bottom: 1px solid #4a4a4a; }
.bookmarks a { display: flex; align-items: center; gap: 5px; font-family: Roboto, "Open Sans", sans-serif; font-size: 10px; line-height: 14px; color: #dcdcdc; }
.bookmarks .all { margin-left: auto; padding-left: 14px; border-left: 1px solid #686868; }
.viewport { flex: 1; display: flex; }
.page { flex: 1; padding: 71px 16px 86px; }
h1 { margin: 0 0 44px; text-align: center; font-family: Roboto, "Open Sans", sans-serif; font-weight: 900; font-size: 33px; line-height: 44px; color: #0cb952; }
.map { position: relative; width: 54%; aspect-ratio: 2 / 1; margin: 0 auto; background: #ddd; font-family: "Liberation Sans", sans-serif; }
.tiles { width: 100%; height: 100%; }
.scrub { fill: #e2ebcf; }
.hill { fill: #d3e5c2; }
.wood { fill: #bddcab; }
.forest { fill: #bbdaa6; opacity: 0.75; }
.sea { fill: #aad3df; }
.river { fill: none; stroke: #c2dde4; stroke-width: 0.8; }
.border { fill: none; stroke: #b79cba; stroke-width: 0.8; }
.nation { fill: none; stroke: #ab90b0; stroke-width: 1.2; }
.sea-line { fill: none; stroke: #8794bd; stroke-width: 0.9; }
.town { fill: #f5f3ef; stroke: #666; stroke-width: 0.6; }
.label { font-family: "Noto Sans", "Noto Sans CJK SC", sans-serif; font-size: 9px; fill: #3c3c3c; stroke: #f7f5f1; stroke-width: 1.5px; stroke-opacity: 0.8; paint-order: stroke; }
.label.r { font-size: 8px; font-style: italic; fill: #7f5890; }
.label.m { font-size: 9px; fill: #8b6698; stroke-width: 1px; }
.label.n { font-size: 10px; fill: #8b6698; }
.label.p { fill: #8b6698; }
.zone { stroke-width: 2; fill-opacity: 0.72; }
.red { fill: #f00; stroke: #f00; }
.orange { fill: orange; stroke: orange; fill-opacity: 0.78; }
.yellow { fill: #ff0; stroke: #ff0; fill-opacity: 0.78; }
.zoom { position: absolute; left: 8px; top: 8px; width: 28px; border: 1px solid #b8b5b0; border-radius: 3px; overflow: hidden; }
.zoom button { display: grid; place-items: center; width: 100%; height: 26px; background: #fff; }
.zoom button + button { border-top: 1px solid #ccc; }
.popup { position: absolute; left: 46%; bottom: 57%; transform: translateX(-50%); padding: 11px 20px 10px 17px; border-radius: 9px; background: #fff; color: #444; font-size: 11px; line-height: 16px; white-space: nowrap; box-shadow: 0 2px 10px rgba(0, 0, 0, 0.4); }
.popup::after { content: ""; position: absolute; left: 50%; top: 100%; width: 20px; height: 10px; margin-left: -10px; background: #fff; clip-path: polygon(0 0, 100% 0, 50% 100%); }
.popup-close { position: absolute; right: 6px; top: 7px; background: transparent; }
.credit { position: absolute; right: 0; bottom: 0; display: flex; align-items: center; gap: 3px; padding: 0 4px 0 3px; background: rgba(255, 255, 255, 0.8); font-size: 10px; line-height: 14px; color: #0078a8; }
.scrollbar { width: 14px; display: flex; flex-direction: column; background: #424242; }
.track { flex: 1; display: flex; flex-direction: column; }
.thumb { height: 46%; margin-top: 232px; background: #686868; }
.taskbar { display: grid; grid-template-columns: 1fr auto 1fr; align-items: center; height: 40px; padding: 0 16px; background: #202024; border-top: 1px solid #4a4a4a; font-size: 10px; line-height: 13px; }
.weather { display: flex; align-items: center; gap: 1px; background: transparent; text-align: left; justify-self: start; color: #c6c6c6; }
.weather b { font-weight: 400; color: #fff; }
.badge-text { font-size: 9px; fill: #4a1d20; }
.centre { display: flex; align-items: center; gap: 11px; }
.search { display: flex; align-items: center; gap: 7px; width: 184px; height: 27px; padding: 0 3px 0 9px; border-radius: 14px; background: #403f45; border: 1px solid #4d4c52; }
.search input { flex: 1; width: 60px; font-size: 11px; color: #ddd; appearance: none; }
.search input::placeholder { color: #cfcfcf; opacity: 1; }
.apps { display: flex; justify-content: space-between; align-items: center; width: 424px; margin-left: -1px; }
.apps .plain { position: relative; width: 20px; height: 34px; }
.apps .active { width: 32px; margin: 0 -6px; background: #303034; border-radius: 4px; }
.active svg { margin: 0 -3px 0 3px; }
.running::after, .active::after { content: ""; position: absolute; bottom: 0; left: 50%; width: 6px; height: 2px; margin-left: -3px; border-radius: 1px; background: #9a9a9e; }
.active::after { width: 14px; margin-left: -7px; background: #f08a78; }
.chrome-n { font-size: 9px; fill: #fff; }
.count { position: absolute; left: 6px; top: 3px; padding: 0 3px; border-radius: 7px; background: #f47f6b; color: #301512; font-size: 9px; line-height: 13px; }
.tray { justify-self: end; display: flex; align-items: center; gap: 6px; color: #f2f2f2; }
.language { margin: 0 8px 0 11px; text-align: center; }
.status { display: flex; gap: 6px; margin-right: 6px; }
.clock { text-align: right; }
</style>
